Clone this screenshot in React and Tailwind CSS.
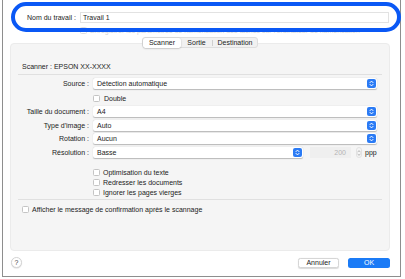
import React from "react";

const font = { fontFamily: '"Liberation Sans", Arial, sans-serif' };

function Arrow() {
  return (
    <span className="flex h-[9px] w-[9px] items-center justify-center rounded-[2px] bg-[#2b7bf5]">
      <svg width="5" height="7" viewBox="0 0 5 7" fill="none" stroke="white" strokeWidth="1" strokeLinecap="round" strokeLinejoin="round">
        <path d="M1 2.6 L2.5 1.1 L4 2.6" />
        <path d="M1 4.4 L2.5 5.9 L4 4.4" />
      </svg>
    </span>
  );
}

function Select({ value, className = "" }) {
  return (
    <div className={`flex h-[11px] items-center justify-between rounded-[2px] bg-white pl-[4px] pr-[1px] shadow-[0_0.5px_1px_rgba(0,0,0,0.25)] ${className}`}>
      <span className="text-[7px] leading-none text-[#222]">{value}</span>
      <Arrow />
    </div>
  );
}

function Box() {
  return <span className="h-[7px] w-[7px] shrink-0 rounded-[1.5px] border border-[#c4c4c4] bg-white" />;
}

function Row({ label, children, className = "" }) {
  return (
    <div className={`flex h-[11px] items-center ${className}`}>
      <span className="w-[79px] pr-[1px] text-right text-[7px] leading-none text-[#222]">{label}</span>
      <div className="ml-[3px] flex items-center">{children}</div>
    </div>
  );
}

function Check({ label, className = "" }) {
  return (
    <div className={`flex h-[10px] items-center gap-[3px] ${className}`}>
      <Box />
      <span className="text-[7px] leading-none text-[#222]">{label}</span>
    </div>
  );
}

export default function App() {
  return (
    <div className="relative h-[279px] w-[405px] overflow-hidden bg-white" style={font}>
      <div className="ml-[2px] flex h-[277px] w-[399px] flex-col border-x border-b border-[#8e8e8e] bg-white">
        <div className="mt-[12px] flex h-[11px] items-center">
          <span className="ml-[24px] w-[53px] text-[7px] leading-none text-[#222]">Nom du travail :</span>
          <div className="flex h-[11px] w-[309px] items-center border border-[#e2e2e2] bg-white pl-[2px]">
            <span className="text-[7px] leading-none text-[#222]">Travail 1</span>
          </div>
        </div>
        <div className="ml-[77px] mt-[3px] flex h-[9px] items-center gap-[3px]">
          <span className="h-[7px] w-[7px] rounded-[1.5px] border border-[#e0e0e0]" />
          <span className="text-[7px] leading-none text-[#d6d6d6]">
            Enregistrer les paramètres de numérisation des tâches sur l'ordinateur de numérisation
          </span>
        </div>
        <div className="relative z-10 ml-[139px] mt-[2px] -mb-[5px] flex h-[11px] w-[116px] items-center rounded-[3px] border border-[#dedede] bg-[#f1f1f1]">
          <span className="flex h-[10px] w-[38px] items-center justify-center rounded-[2.5px] bg-white text-[7px] leading-none text-[#222] shadow-[0_0.5px_1.5px_rgba(0,0,0,0.3)]">
            Scanner
          </span>
          <span className="flex h-[10px] w-[31px] items-center justify-center text-[7px] leading-none text-[#222]">Sortie</span>
          <span className="h-[6px] w-px bg-[#cfcfcf]" />
          <span className="flex h-[10px] flex-1 items-center justify-center text-[7px] leading-none text-[#222]">Destination</span>
        </div>
        <div className="ml-[7px] flex h-[208px] w-[380px] flex-col rounded-[4px] border border-[#ebebeb] bg-[#f5f5f5]">
          <div className="ml-[11px] mt-[19px] text-[7px] leading-[8px] text-[#222]">Scanner : EPSON XX-XXXX</div>
          <div className="ml-[7px] mt-[3px] h-px w-[364px] bg-[#e0e0e0]" />
          <Row label="Source :" className="mt-[3px]">
            <Select value="Détection automatique" className="w-[284px]" />
          </Row>
          <div className="ml-[82px] mt-[6px] flex h-[7px] items-center gap-[4px]">
            <Box />
            <span className="text-[7px] leading-none text-[#222]">Double</span>
          </div>
          <Row label="Taille du document :" className="mt-[4px]">
            <Select value="A4" className="w-[284px]" />
          </Row>
          <Row label="Type d'image :" className="mt-[3px]">
            <Select value="Auto" className="w-[284px]" />
          </Row>
          <Row label="Rotation :" className="mt-[2px]">
            <Select value="Aucun" className="w-[284px]" />
          </Row>
          <Row label="Résolution :" className="mt-[3px]">
            <Select value="Basse" className="w-[210px]" />
            <div className="ml-[7px] flex h-[11px] w-[41px] items-center justify-end bg-[#efefef] pr-[5px]">
              <span className="text-[7px] leading-none text-[#b4b4b4]">200</span>
            </div>
            <span className="ml-[5px] flex h-[11px] w-[6px] flex-col items-center justify-center rounded-[3px] border border-[#e2e2e2]">
              <svg width="4" height="8" viewBox="0 0 4 8" fill="none" stroke="#a8a8a8" strokeWidth="0.8" strokeLinecap="round">
                <path d="M0.8 3 L2 1.6 L3.2 3" />
                <path d="M0.8 5 L2 6.4 L3.2 5" />
              </svg>
            </span>
            <span className="ml-[3px] text-[7px] leading-none text-[#222]">ppp</span>
          </Row>
          <Check label="Optimisation du texte" className="ml-[82px] mt-[9px]" />
          <Check label="Redresser les documents" className="ml-[82px]" />
          <Check label="Ignorer les pages vierges" className="ml-[82px]" />
          <div className="ml-[7px] mt-[2px] h-px w-[364px] bg-[#e0e0e0]" />
          <Check label="Afficher le message de confirmation après le scannage" className="ml-[11px] mt-[4px]" />
        </div>
        <div className="mt-[6px] flex h-[11px] items-center">
          <span className="ml-[8px] flex h-[11px] w-[11px] items-center justify-center rounded-full border border-[#d4d4d4] bg-white text-[7px] leading-none text-[#444] shadow-[0_0.5px_1px_rgba(0,0,0,0.15)]">
            ?
          </span>
          <span className="ml-[276px] flex h-[10px] w-[41px] items-center justify-center rounded-[2.5px] border border-[#d6d6d6] bg-white text-[7px] leading-none text-[#222] shadow-[0_0.5px_1px_rgba(0,0,0,0.15)]">
            Annuler
          </span>
          <span className="ml-[9px] flex h-[10px] w-[42px] items-center justify-center rounded-[2.5px] bg-[#1b7bf6] text-[7px] leading-none text-white">
            OK
          </span>
        </div>
      </div>
      <div className="absolute left-[11px] top-[2px] h-[30px] w-[390px] rounded-full border-[4px] border-[#0a58f5]" />
    </div>
  );
}
